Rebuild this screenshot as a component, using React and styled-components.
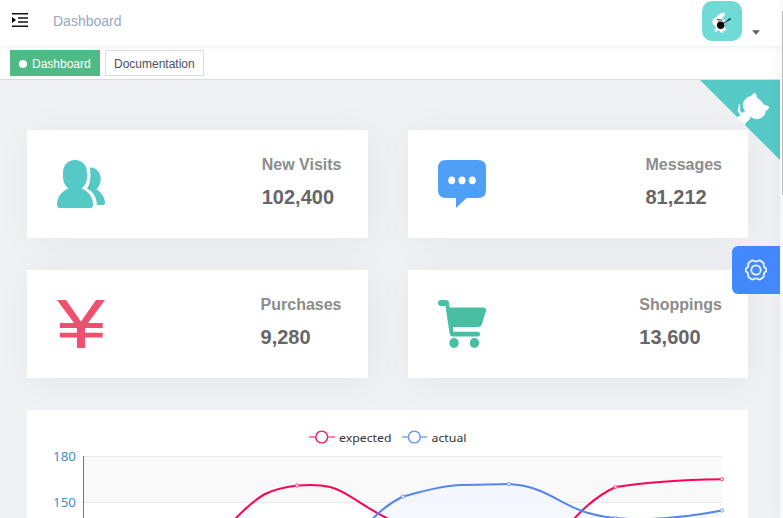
import React from "react";
import styled, { createGlobalStyle } from "styled-components";

const GlobalStyle = createGlobalStyle`
  * { box-sizing: border-box; }
  body { margin: 0; overflow: hidden; font-family: "Liberation Sans", Arial, sans-serif; }
`;
const Shell = styled.div`
  position: relative;
  width: 783px;
  height: 518px;
  display: flex;
  overflow: hidden;
  background: #f9f9f9;
`;
const Main = styled.div`
  position: relative;
  width: 780px;
  height: 518px;
  display: flex;
  flex-direction: column;
  overflow: hidden;
`;
const Navbar = styled.header`
  position: relative;
  z-index: 1;
  flex: none;
  height: 46px;
  display: flex;
  align-items: flex-start;
  padding: 0 20px 0 12px;
  background: #fff;
  box-shadow: 0 1px 4px rgba(0, 21, 41, 0.08);
`;
const MenuIcon = styled.svg`
  width: 16px;
  height: 16px;
  margin-top: 12px;
`;
const Crumb = styled.span`
  margin-left: 25px;
  font-size: 14px;
  line-height: 42px;
  color: #97a8be;
`;
const Account = styled.div`
  margin-left: auto;
  display: flex;
  align-items: flex-start;
  gap: 10px;
`;
const Avatar = styled.svg`
  width: 40px;
  height: 40px;
  margin-top: 1px;
  border-radius: 10px;
  background: #70dad6;
`;
const Caret = styled.svg`
  width: 8px;
  height: 5px;
  margin-top: 30px;
`;
const TagsBar = styled.nav`
  flex: none;
  height: 34px;
  display: flex;
  gap: 5px;
  padding: 4px 10px 0;
  background: #fff;
  border-bottom: 1px solid #d8dce5;
  box-shadow: 0 1px 3px rgba(0, 0, 0, 0.08);
`;
const Tag = styled.span`
  height: 26px;
  display: flex;
  align-items: center;
  padding: 1px 8px 0;
  font-size: 12px;
  color: ${(p) => (p.$active ? "#fff" : "#495060")};
  background: ${(p) => (p.$active ? "#4fba86" : "#fff")};
  border: 1px solid ${(p) => (p.$active ? "#4fba86" : "#d8dce5")};
  ${(p) => (p.$active ? "width: 90px;" : "width: 99px;")}
`;
const Dot = styled.i`
  width: 8px;
  height: 8px;
  margin-right: 5px;
  border-radius: 50%;
  background: #fff;
`;
const Content = styled.main`
  position: relative;
  flex: 1;
  padding: 50px 32px 0 27px;
  background: #f0f1f5;
`;
const Corner = styled.svg`
  position: absolute;
  top: 0;
  right: 0;
  width: 80px;
  height: 80px;
`;
const Cards = styled.section`
  display: grid;
  grid-template-columns: 340.5px 340.5px;
  gap: 32px 40px;
`;
const Card = styled.article`
  height: 108px;
  display: flex;
  justify-content: space-between;
  padding: 26px 26px 0 30px;
  background: #fff;
  box-shadow: 4px 4px 40px rgba(0, 0, 0, 0.05);
`;
const CardIcon = styled.svg`
  width: 48px;
  height: 48px;
  margin-top: 4px;
`;
const CardText = styled.div`
  font-weight: bold;
`;
const Label = styled.div`
  margin-bottom: 11px;
  font-size: 16px;
  line-height: 18px;
  color: #8c8c8c;
`;
const Value = styled.div`
  font-size: 20px;
  line-height: 24px;
  color: #666;
`;
const ChartPanel = styled.section`
  width: 721px;
  height: 108px;
  margin-top: 32px;
  overflow: hidden;
  background: #fff;
`;
const Chart = styled.svg`
  display: block;
  font-family: "Noto Sans", sans-serif;
  font-size: 11.5px;
`;
const AxisLabels = styled.g`
  font-size: 12.5px;
  fill: #428fca;
`;
const Settings = styled.button`
  position: absolute;
  top: 246px;
  right: 0;
  width: 48px;
  height: 48px;
  display: flex;
  align-items: center;
  justify-content: center;
  padding: 0;
  border: 0;
  border-radius: 6px 0 0 6px;
  background: #4389fd;
`;
const Drawer = styled.aside`
  position: absolute;
  top: 0;
  left: 780px;
  width: 260px;
  height: 518px;
  box-shadow: 0 0 15px rgba(0, 0, 0, 0.05);
`;
const Scrollbar = styled.div`
  position: relative;
  width: 3px;
  padding: 11px 0 0 2px;
  background: #f9f9f9;
`;
const Thumb = styled.div`
  height: 184px;
  background: #bdbdbd;
`;

const icons = {
  people: (
    <g fill="#55c9c6">
      <path d="M18 0C25 0 30 5 30 13V17C30 22 28 26 24.500 28.500C31 31 36 37 36 44V45.500C36 47 35 48 33.500 48H2.500C1 48 0 47 0 45.500V44C0 37 5 31 11.500 28.500C8 26 6 22 6 17V13C6 5 11 0 18 0Z" />
      <path d="M32.500 7.500C39 7 43.700 12 43.700 19C43.700 23 42 27 39.300 29.300C44.500 32 48 38 48 43C48 44.300 47 45 45.500 45H40C39.500 37 36 31.500 30 28.800C33 24 33.500 20 33.500 14C33.500 11 33.200 9.300 32.500 7.500Z" />
    </g>
  ),
  message: (
    <g>
      <path fill="#509ff6" d="M8 0H40Q48 0 48 8V30Q48 38 40 38H28.500L18 48V38H8Q0 38 0 30V8Q0 0 8 0Z" />
      {[13.7, 24, 34.300].map((x) => (
        <ellipse key={x} cx={x} cy="20.300" rx="3.500" ry="3.900" fill="#fff" />
      ))}
    </g>
  ),
  money: (
    <g fill="#f0506f">
      <path d="M0 0H9L24 21.500L39 0H48L31 23H45.700V28H28V33H45.700V37.500H28V48H20V37.500H2.800V33H20V28H2.800V23H17Z" />
      <path fill="#f7a9b7" d="M2.800 32.500H20V33H2.800ZM28 32.500H45.700V33H28Z" />
    </g>
  ),
  cart: (
    <g fill="#48bfa2">
      <path d="M3 0H8Q10.500 0 11 3L11.500 7.600H46Q48.500 8 47.900 11L44 24Q43 27 40 27H15L15.500 31.800H40Q42 32 42 34.200T40 36.500H15Q12 36.500 11.500 33L7.500 6H3Q0 6 0 3T3 0Z" />
      <ellipse cx="16" cy="43" rx="4.700" ry="5" />
      <ellipse cx="36.400" cy="43" rx="4.700" ry="5" />
    </g>
  ),
};
const stats = [
  { icon: "people", label: "New Visits", value: "102,400" },
  { icon: "message", label: "Messages", value: "81,212" },
  { icon: "money", label: "Purchases", value: "9,280" },
  { icon: "cart", label: "Shoppings", value: "13,600" },
];

const gear =
  "M7.300 1.300L9.500 2.300H12.500L14.700 1.300L18.800 4.200L18.700 6.800L19.800 8.700L21.300 9.700V12.300L19.800 13.300L18.700 15.200L18.800 17.800L14.700 20.700L12.500 19.700H9.500L7.300 20.700L3.200 17.800L3.300 15.200L2.200 13.300L.7 12.300V9.700L2.200 8.700L3.300 6.800L3.200 4.200Z";

const actualLine =
  "M355 540C370 519 385 505 403 496.500C420 492 438 486.500 456 485.200C475 484.500 492 484.500 509 484C548 486 562 508 594 514.500C602 516.500 609 517.500 615.500 518C650 521.500 690 516.500 722 510.500";

function LineChart() {
  return (
    <Chart width="721" height="108" viewBox="27 410 721 108">
      <rect x="84" y="457" width="638" height="46" fill="#f9f9f9" />
      <path d="M84 456.500H722M84 502.500H722" stroke="#e9e9e9" />
      <path d={`${actualLine}V550H355Z`} fill="#f3f8ff" fillOpacity=".8" />
      <path d="M83.500 456V518" stroke="#3888c5" />
      <g fill="none" strokeWidth="2">
        <path stroke="#ff005a" d="M220 534C238 516 252 501 265 494C276 488.500 285 487 297 485.500C310 484.500 320 484.500 330 487C349 491 370 514 403 525" />
        <path stroke="#ff005a" d="M560 535C578 513 594 497 615.500 487C650 481.500 690 479.700 722 479.200" />
        <path stroke="#5585f0" d={actualLine} />
      </g>
      <g fill="#fff">
        {[[297, 485.5], [615.5, 487], [722, 479.2]].map(([x, y]) => (
          <circle key={x} cx={x} cy={y} r="1.600" stroke="#f94d87" />
        ))}
        {[[403, 496.5], [509, 484], [615.5, 518], [722, 510.5]].map(([x, y]) => (
          <circle key={x} cx={x} cy={y} r="1.600" stroke="#6e9af5" />
        ))}
      </g>
      <g fill="#fff">
        <path d="M309 437H335" stroke="#ff6399" strokeWidth="1.600" />
        <circle cx="321.700" cy="437" r="5.900" stroke="#ed1865" strokeWidth="1.400" />
        <path d="M402 437H427" stroke="#85a9f8" strokeWidth="1.600" />
        <circle cx="414.300" cy="437" r="5.900" stroke="#6794ef" strokeWidth="1.400" />
      </g>
      <g fill="#333">
        <text x="339" y="442" textLength="52.500" lengthAdjust="spacingAndGlyphs">expected</text>
        <text x="431.500" y="442" textLength="35" lengthAdjust="spacingAndGlyphs">actual</text>
      </g>
      <AxisLabels>
        <text x="53" y="461" textLength="23" lengthAdjust="spacingAndGlyphs">180</text>
        <text x="53" y="507" textLength="23" lengthAdjust="spacingAndGlyphs">150</text>
      </AxisLabels>
    </Chart>
  );
}

export default function App() {
  return (
    <Shell>
      <GlobalStyle />
      <Main>
        <Navbar>
          <MenuIcon viewBox="0 0 16 16">
            <path d="M0 1.800H16M6 6H16M6 10H16M0 14.300H16" stroke="#151515" strokeWidth="1.500" />
            <path d="M0 5L4 8L0 11Z" fill="#000" />
          </MenuIcon>
          <Crumb>Dashboard</Crumb>
          <Account>
            <Avatar viewBox="0 0 40 40">
              <path fill="#fff" d="M10 20L12 17.500L14 16.500L16 14L20.500 11.500L23 12.500L22.500 15L19.500 17L22 18L23 20L22.500 26L24.500 29L22.500 30L21 29L21.500 31.500L18.500 31.500L17 29L13.500 31L12.500 29L14.500 26L12 24.500L10.500 22Z" />
              <path d="M15 18.600L20.500 19.100M21 22.500L28.500 18" stroke="#172024" strokeWidth=".9" />
              <path d="M25 19.200L28 17L29 18L26 19.800Z" fill="#172024" />
              <circle cx="18.700" cy="24.300" r="3.700" fill="#080808" />
              <path d="M16 20.300H18" stroke="#d55374" />
            </Avatar>
            <Caret viewBox="0 0 8 5"><path d="M0 .3H8L4 4.700Z" fill="#5a5e66" /></Caret>
          </Account>
        </Navbar>
        <TagsBar>
          <Tag $active><Dot />Dashboard</Tag>
          <Tag>Documentation</Tag>
        </TagsBar>
        <Content>
          <Corner viewBox="0 0 250 250">
            <path fill="#55c9c6" d="M0,0 L115,115 L130,115 L142,142 L250,250 L250,0 Z" />
            <path fill="#fff" d="M128.3,109.0 C113.8,99.7 119.0,89.6 119.0,89.6 C122.0,82.7 120.5,78.6 120.5,78.6 C119.2,72.0 123.4,76.3 123.4,76.3 C127.3,80.9 125.5,87.3 125.5,87.3 C122.9,97.6 130.6,101.9 134.4,103.2" />
            <path fill="#fff" d="M115.0,115.0 C114.9,115.1 118.7,116.5 119.8,115.4 L133.7,101.6 C136.9,99.2 139.9,98.4 142.2,98.6 C133.8,88.0 127.5,74.4 143.8,58.0 C148.5,53.4 154.0,51.2 159.7,51.0 C160.3,49.4 163.2,43.6 171.4,40.1 C171.4,40.1 176.1,42.5 178.8,56.2 C183.1,58.6 187.2,61.8 190.9,65.4 C194.5,69.0 197.7,73.2 200.1,77.6 C213.8,80.2 216.3,84.9 216.3,84.9 C212.7,93.1 206.9,96.0 205.4,96.6 C205.1,102.4 203.0,107.8 198.3,112.5 C181.9,128.9 168.3,122.5 157.7,114.1 C157.9,116.9 156.7,120.9 152.7,124.9 L141.0,136.5 C139.8,137.7 141.6,141.9 141.8,141.8 Z" />
          </Corner>
          <Cards>
            {stats.map((s) => (
              <Card key={s.label}>
                <CardIcon viewBox="0 0 48 48">{icons[s.icon]}</CardIcon>
                <CardText>
                  <Label>{s.label}</Label>
                  <Value>{s.value}</Value>
                </CardText>
              </Card>
            ))}
          </Cards>
          <ChartPanel><LineChart /></ChartPanel>
        </Content>
        <Drawer />
        <Settings aria-label="Settings">
          <svg width="22" height="22" viewBox="0 0 22 22" fill="none" stroke="#f2f7ff" strokeWidth="1.700" strokeLinejoin="round">
            <path d={gear} />
            <circle cx="11" cy="11" r="4.700" />
          </svg>
        </Settings>
      </Main>
      <Scrollbar><Thumb /></Scrollbar>
    </Shell>
  );
}
